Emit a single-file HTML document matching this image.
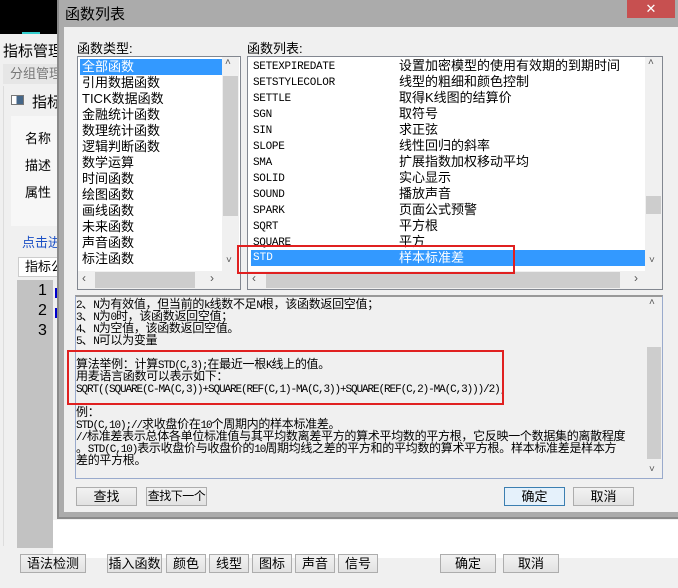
<!DOCTYPE html>
<html><head><meta charset="utf-8"><style>
*{margin:0;padding:0;box-sizing:border-box}
body{width:678px;height:588px;overflow:hidden;background:#f0f0f0;position:relative;font-family:"Liberation Sans","Noto Sans CJK SC",sans-serif;font-size:12px;color:#000}
.a{position:absolute;white-space:nowrap}
.btn{position:absolute;background:linear-gradient(#f2f2f2,#e2e2e2);border:1px solid #adadad;text-align:center;font-size:13px;line-height:17px;white-space:nowrap;overflow:hidden}
.mono{font-family:"Liberation Mono","Noto Sans CJK SC",monospace}
.li{position:absolute;height:16px;line-height:16px;font-size:13px;white-space:nowrap}
i{font-style:normal;font-family:"Liberation Mono",monospace;font-size:11px;letter-spacing:-1.1px;line-height:12px}
.ta{font-family:"Noto Sans CJK SC",sans-serif;font-size:12px;line-height:12px;letter-spacing:-0.3px}
.ta div{height:12px;line-height:12px;overflow:visible;white-space:nowrap}
</style></head><body>
<!-- background app -->
<div class="a" style="left:0;top:0;width:60px;height:34px;background:#000"></div>
<div class="a" style="left:22px;top:32px;width:18px;height:2px;background:#3cc"></div>
<div class="a" style="left:3px;top:40px;font-size:15px">指标管理</div>
<div class="a" style="left:3px;top:64px;width:57px;height:20px;background:#e6e6e6;color:#777;font-size:13px;line-height:20px;padding-left:7px">分组管理</div>
<div class="a" style="left:3px;top:86px;width:57px;height:460px;border-left:1px solid #ddd"></div>
<div class="a" style="left:11px;top:95px;width:13px;height:10px;border:1px solid #777;background:linear-gradient(90deg,#fff 40%,#468 40%)"></div>
<div class="a" style="left:32px;top:91px;font-size:15px">指标</div>
<div class="a" style="left:11px;top:116px;width:49px;height:110px;background:#f7f7f7"></div>
<div class="a" style="left:25px;top:128px;font-size:13px">名称</div>
<div class="a" style="left:25px;top:155px;font-size:13px">描述</div>
<div class="a" style="left:25px;top:182px;font-size:13px">属性</div>
<div class="a" style="left:22px;top:232px;font-size:13px;color:#1a4fc4">点击进</div>
<div class="a" style="left:18px;top:257px;width:42px;height:20px;background:#fff;border:1px solid #ccc;font-size:13px;line-height:18px;padding-left:6px">指标公</div>
<div class="a" style="left:17px;top:280px;width:36px;height:268px;background:#c2c2c2"></div>
<div class="a" style="left:38px;top:282px;font-size:16px">1</div>
<div class="a" style="left:38px;top:302px;font-size:16px">2</div>
<div class="a" style="left:38px;top:322px;font-size:16px">3</div>
<div class="a" style="left:55px;top:288px;width:2px;height:10px;background:#00c"></div>
<div class="a" style="left:55px;top:308px;width:2px;height:10px;background:#00c"></div>
<div class="a" style="left:53px;top:520px;width:625px;height:38px;background:#fff"></div>
<div class="btn" style="left:20px;top:554px;width:66px;height:19px">语法检测</div>
<div class="btn" style="left:107px;top:554px;width:55px;height:19px">插入函数</div>
<div class="btn" style="left:166px;top:554px;width:40px;height:19px">颜色</div>
<div class="btn" style="left:209px;top:554px;width:40px;height:19px">线型</div>
<div class="btn" style="left:252px;top:554px;width:40px;height:19px">图标</div>
<div class="btn" style="left:295px;top:554px;width:40px;height:19px">声音</div>
<div class="btn" style="left:338px;top:554px;width:40px;height:19px">信号</div>
<div class="btn" style="left:440px;top:554px;width:56px;height:19px">确定</div>
<div class="btn" style="left:503px;top:554px;width:56px;height:19px">取消</div>

<!-- dialog -->
<div class="a" style="left:57px;top:0;width:621px;height:519px;background:#ababab;border-left:2px solid #8a8a8a;border-bottom:2px solid #8a8a8a"></div>
<div class="a" style="left:65px;top:3px;font-size:15px">函数列表</div>
<div class="a" style="left:627px;top:0;width:48px;height:18px;background:#c75050;color:#fff;text-align:center;font-size:13px;line-height:17px">✕</div>
<div class="a" style="left:64px;top:27px;width:614px;height:485px;background:#f0f0f0"></div>
<div class="a" style="left:77px;top:38px;font-size:13px">函数类型:</div>
<div class="a" style="left:247px;top:38px;font-size:13px">函数列表:</div>

<!-- left list -->
<div class="a" style="left:77px;top:56px;width:164px;height:234px;background:#fff;border:1px solid #828790"></div>
<div class="li" style="left:80px;top:59px;width:142px;background:#3399ff;color:#fff;padding-left:2px">全部函数</div>
<div class="a" style="left:82px;top:75px;font-size:13px;line-height:16px">引用数据函数<br>TICK数据函数<br>金融统计函数<br>数理统计函数<br>逻辑判断函数<br>数学运算<br>时间函数<br>绘图函数<br>画线函数<br>未来函数<br>声音函数<br>标注函数</div>
<div class="a" style="left:222px;top:57px;width:17px;height:214px;background:#f0f0f0"></div>
<div class="a" style="left:223px;top:76px;width:15px;height:140px;background:#cdcdcd"></div>
<div class="a" style="left:225px;top:57px;font-size:10px;color:#555">˄</div>
<div class="a" style="left:226px;top:255px;font-size:10px;color:#555">˅</div>
<div class="a" style="left:78px;top:271px;width:162px;height:18px;background:#f0f0f0"></div>
<div class="a" style="left:95px;top:272px;width:100px;height:16px;background:#cdcdcd"></div>
<div class="a" style="left:82px;top:271px;color:#555">‹</div><div class="a" style="left:210px;top:271px;color:#555">›</div>

<!-- right list -->
<div class="a" style="left:247px;top:56px;width:416px;height:234px;background:#fff;border:1px solid #828790"></div>
<div class="a mono" style="left:253px;top:59px;font-size:11px;line-height:16px;letter-spacing:-0.3px">SETEXPIREDATE<br>SETSTYLECOLOR<br>SETTLE<br>SGN<br>SIN<br>SLOPE<br>SMA<br>SOLID<br>SOUND<br>SPARK<br>SQRT<br>SQUARE</div>
<div class="a" style="left:399px;top:58px;font-size:13px;line-height:16px">设置加密模型的使用有效期的到期时间<br>线型的粗细和颜色控制<br>取得K线图的结算价<br>取符号<br>求正弦<br>线性回归的斜率<br>扩展指数加权移动平均<br>实心显示<br>播放声音<br>页面公式预警<br>平方根<br>平方</div>
<div class="li" style="left:251px;top:250px;width:394px;background:#3399ff;color:#fff"><span class="mono" style="position:absolute;left:2px;font-size:11px">STD</span><span style="position:absolute;left:148px">样本标准差</span></div>
<div class="a" style="left:645px;top:57px;width:17px;height:214px;background:#f0f0f0"></div>
<div class="a" style="left:646px;top:196px;width:15px;height:18px;background:#cdcdcd"></div>
<div class="a" style="left:648px;top:57px;font-size:10px;color:#555">˄</div>
<div class="a" style="left:649px;top:255px;font-size:10px;color:#555">˅</div>
<div class="a" style="left:248px;top:271px;width:414px;height:18px;background:#f0f0f0"></div>
<div class="a" style="left:266px;top:272px;width:354px;height:16px;background:#cdcdcd"></div>
<div class="a" style="left:252px;top:271px;color:#555">‹</div><div class="a" style="left:634px;top:271px;color:#555">›</div>
<div class="a" style="left:237px;top:245px;width:278px;height:29px;border:2px solid #e02020"></div>

<!-- text area -->
<div class="a" style="left:75px;top:295px;width:588px;height:184px;border:1px solid #9ac;border-top:2px solid #999;background:#f0f0f0"></div>
<div class="a" style="left:646px;top:297px;width:16px;height:181px;background:#f0f0f0"></div>
<div class="a" style="left:647px;top:347px;width:14px;height:112px;background:#cdcdcd"></div>
<div class="a" style="left:649px;top:297px;font-size:10px;color:#555">˄</div>
<div class="a" style="left:649px;top:464px;font-size:10px;color:#555">˅</div>
<div class="a ta" style="left:76px;top:298px">
<div><i>2</i>、<i>N</i>为有效值，但当前的<i>k</i>线数不足<i>N</i>根，该函数返回空值；</div>
<div><i>3</i>、<i>N</i>为<i>0</i>时，该函数返回空值；</div>
<div><i>4</i>、<i>N</i>为空值，该函数返回空值。</div>
<div><i>5</i>、<i>N</i>可以为变量</div>
<div></div>
<div>算法举例：计算<i>STD(C,3);</i>在最近一根<i>K</i>线上的值。</div>
<div>用麦语言函数可以表示如下：</div>
<div><i>SQRT((SQUARE(C-MA(C,3))+SQUARE(REF(C,1)-MA(C,3))+SQUARE(REF(C,2)-MA(C,3)))/2);</i></div>
<div></div>
<div>例：</div>
<div><i>STD(C,10);//</i>求收盘价在<i>10</i>个周期内的样本标准差。</div>
<div><i>//</i>标准差表示总体各单位标准值与其平均数离差平方的算术平均数的平方根，它反映一个数据集的离散程度</div>
<div>。<i>STD(C,10)</i>表示收盘价与收盘价的<i>10</i>周期均线之差的平方和的平均数的算术平方根。样本标准差是样本方</div>
<div>差的平方根。</div>
</div>
<div class="a" style="left:67px;top:350px;width:437px;height:55px;border:2px solid #e02020"></div>

<div class="btn" style="left:76px;top:487px;width:61px;height:19px">查找</div>
<div class="btn" style="left:146px;top:487px;width:61px;height:19px;font-size:12px;letter-spacing:-0.5px">查找下一个</div>
<div class="btn" style="left:504px;top:487px;width:61px;height:19px;border-color:#3c7fb1;background:#e5f1fb">确定</div>
<div class="btn" style="left:573px;top:487px;width:61px;height:19px">取消</div>
</body></html>
